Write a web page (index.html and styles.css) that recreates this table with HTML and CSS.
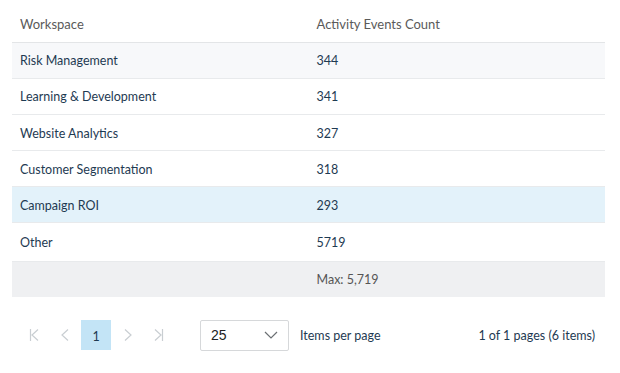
FILE: index.html
```html
<!DOCTYPE html>
<html>
<head>
<meta charset="utf-8">
<link rel="stylesheet" href="styles.css">
</head>
<body>
<div class="wrap">
  <table class="grid">
    <thead>
      <tr><th>Workspace</th><th>Activity Events Count</th></tr>
    </thead>
    <tbody>
      <tr class="alt"><td>Risk Management</td><td>344</td></tr>
      <tr><td>Learning &amp; Development</td><td>341</td></tr>
      <tr><td>Website Analytics</td><td>327</td></tr>
      <tr><td>Customer Segmentation</td><td>318</td></tr>
      <tr class="sel"><td>Campaign ROI</td><td>293</td></tr>
      <tr class="last"><td>Other</td><td>5719</td></tr>
    </tbody>
    <tfoot>
      <tr><td></td><td>Max: 5,719</td></tr>
    </tfoot>
  </table>
  <div class="pager">
    <div class="nav">
      <span class="ic"><svg width="12" height="14" viewBox="0 0 12 14"><path d="M2.5 1v12M10 1.5L4 7l6 5.5" fill="none" stroke="#c9ced2" stroke-width="1.2"/></svg></span>
      <span class="ic"><svg width="12" height="14" viewBox="0 0 12 14"><path d="M9 1.5L3 7l6 5.5" fill="none" stroke="#c9ced2" stroke-width="1.2"/></svg></span>
      <span class="page">1</span>
      <span class="ic"><svg width="12" height="14" viewBox="0 0 12 14"><path d="M3 1.5L9 7l-6 5.5" fill="none" stroke="#c9ced2" stroke-width="1.2"/></svg></span>
      <span class="ic"><svg width="12" height="14" viewBox="0 0 12 14"><path d="M9.5 1v12M2 1.5L8 7l-6 5.5" fill="none" stroke="#c9ced2" stroke-width="1.2"/></svg></span>
    </div>
    <div class="select"><span>25</span><svg width="14" height="8" viewBox="0 0 14 8"><path d="M1 1l6 6 6-6" fill="none" stroke="#6b6f73" stroke-width="1.2"/></svg></div>
    <span class="ipp">Items per page</span>
    <span class="info">1 of 1 pages (6 items)</span>
  </div>
</div>
</body>
</html>
```
FILE: styles.css
```css
* { box-sizing: border-box; }
body { margin: 0; background: #fff; font-family: "Source Sans Pro", Lato, "Liberation Sans", sans-serif; font-size: 12.5px; color: #1e3a52; }
.wrap { padding: 6px 15px 0 12px; }
.grid { width: 100%; border-collapse: collapse; table-layout: fixed; }
.grid th { text-align: left; font-weight: 400; color: #5a5a5a; height: 36px; padding: 0 8px; border-bottom: 1px solid #e3e5e7; font-size: 13px; }
.grid td { height: 36px; padding: 0 8px; border-bottom: 1px solid #e8eaec; }
.grid tbody tr:nth-child(n+3) td { padding-top: 2px; }
.grid tr.alt td { background: #f7f8fa; }
.grid tr.sel td { background: #e3f2fa; }
.grid tr.last td { height: 39px; padding-top: 0; }
.grid tfoot td { background: #eff0f2; color: #555; height: 36px; border-bottom: none; border-top: 1px solid #e3e5e7; }
.pager { display: flex; align-items: center; height: 66px; padding: 10px 10px 0 6px; }
.nav { display: flex; align-items: center; }
.ic { width: 31px; height: 30px; display: flex; align-items: center; justify-content: center; }
.page { width: 30px; height: 30px; background: #c3e4f6; display: flex; align-items: center; justify-content: center; margin: 0 1px; padding-top: 2px; }
.select { margin-left: 26px; width: 89px; height: 31px; border: 1px solid #d6d8da; border-radius: 2px; display: flex; align-items: center; justify-content: space-between; padding: 0 10px 0 10px; font-family: "Liberation Sans", Arial, sans-serif; font-size: 14px; color: #222; }
.ipp { margin-left: 11px; }
.info { margin-left: auto; }
```
